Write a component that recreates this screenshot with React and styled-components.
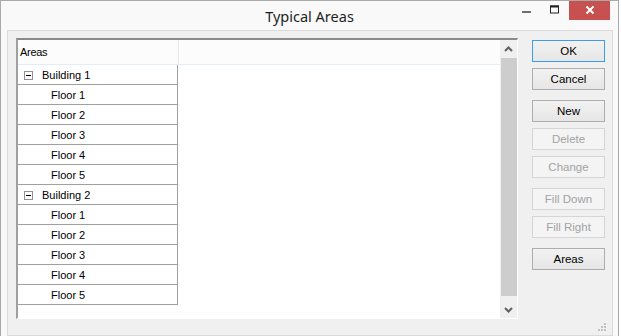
import styled, { createGlobalStyle } from 'styled-components';

const GlobalStyle = createGlobalStyle`
  html, body {
    margin: 0;
    padding: 0;
    background: #ffffff;
  }
  body {
    font-family: 'Liberation Sans', Arial, sans-serif;
  }
`;

const Window = styled.div`
  width: 619px;
  height: 336px;
  box-sizing: border-box;
  border: 1px solid #a9a9a9;
  border-bottom: none;
  background: #f9f9f9;
  display: flex;
  flex-direction: column;
  overflow: hidden;
`;

const TitleBar = styled.div`
  height: 29px;
  display: flex;
  align-items: flex-start;
`;

const Title = styled.div`
  flex: 1;
  text-align: center;
  font-family: 'Noto Sans', 'Open Sans', sans-serif;
  font-size: 14.5px;
  color: #1e1e1e;
  line-height: 31px;
  padding-left: 105px;
`;

const Caption = styled.div`
  display: flex;
  align-items: flex-start;
  margin-top: -1px;
  margin-right: 8px;
`;

const CaptionButton = styled.div`
  width: ${(p) => p.$w || 27}px;
  height: 20px;
  display: flex;
  align-items: center;
  justify-content: center;
  background: ${(p) => (p.$close ? '#c75050' : 'transparent')};
`;

const Client = styled.div`
  flex: 1;
  margin: 0 5px 0 6px;
  border: 1px solid #dadada;
  background: #f0f0f0;
  display: flex;
  padding: 7px 0 0 8px;
  gap: 14px;
  position: relative;
`;

const Grid = styled.div`
  width: 502px;
  height: 281px;
  box-sizing: border-box;
  border-top: 2px solid #8a8a8a;
  border-left: 2px solid #a0a0a0;
  border-right: 1px solid #ffffff;
  border-bottom: 1px solid #ffffff;
  background: #ffffff;
  display: flex;
`;

const GridBody = styled.div`
  flex: 1;
  display: flex;
  flex-direction: column;
`;

const Header = styled.div`
  height: 25px;
  display: flex;
  background: #fcfcfc;
  border-bottom: 1px solid #e3ecf8;
  box-sizing: border-box;
`;

const HeaderCell = styled.div`
  width: ${(p) => p.$w}px;
  flex: ${(p) => (p.$w ? 'none' : 1)};
  border-right: ${(p) => (p.$w ? '1px solid #e6eaf0' : 'none')};
  font-size: 11px;
  color: #000;
  line-height: 24px;
  padding-left: 2px;
  letter-spacing: -0.3px;
`;

const Rows = styled.div`
  display: flex;
  flex-direction: column;
`;

const Row = styled.div`
  width: 160px;
  height: 20px;
  box-sizing: border-box;
  border-right: 1px solid #a0a0a0;
  border-bottom: 1px solid #a0a0a0;
  display: flex;
  align-items: center;
  padding-left: ${(p) => (p.$child ? 33 : 6)}px;
  font-size: 11px;
  color: #000;
`;

const Toggle = styled.span`
  width: 9px;
  height: 9px;
  box-sizing: border-box;
  border: 1px solid #919191;
  position: relative;
  margin-right: 9px;
  margin-top: 1px;

  &::after {
    content: '';
    position: absolute;
    left: 1px;
    right: 1px;
    top: 3px;
    height: 1px;
    background: #000;
  }
`;

const ScrollBar = styled.div`
  width: 17px;
  background: #f0f0f0;
  display: flex;
  flex-direction: column;
  align-items: stretch;
`;

const Arrow = styled.div`
  height: 17px;
  display: flex;
  align-items: center;
  justify-content: center;
`;

const Thumb = styled.div`
  flex: 1;
  margin: 1px 0 5px 1px;
  background: #cdcdcd;
`;

const Buttons = styled.div`
  display: flex;
  flex-direction: column;
  padding-top: 2px;
`;

const Button = styled.div`
  width: 73px;
  height: 22px;
  margin-top: ${(p) => p.$gap}px;
  box-sizing: border-box;
  border: 1px solid ${(p) => (p.$default ? '#3c9cf0' : p.$disabled ? '#d5d5d5' : '#adadad')};
  background: ${(p) => (p.$disabled ? '#f4f4f4' : 'linear-gradient(#f2f2f2, #e6e6e6)')};
  color: ${(p) => (p.$disabled ? '#a3a3a3' : '#000')};
  font-size: 11.5px;
  display: flex;
  align-items: center;
  justify-content: center;
`;

const Grip = styled.svg`
  position: absolute;
  right: 5px;
  bottom: 3px;
`;

const buildings = ['Building 1', 'Building 2'];
const floors = ['Floor 1', 'Floor 2', 'Floor 3', 'Floor 4', 'Floor 5'];

const buttons = [
  { label: 'OK', gap: 0, def: true },
  { label: 'Cancel', gap: 6 },
  { label: 'New', gap: 10 },
  { label: 'Delete', gap: 6, disabled: true },
  { label: 'Change', gap: 6, disabled: true },
  { label: 'Fill Down', gap: 10, disabled: true },
  { label: 'Fill Right', gap: 6, disabled: true },
  { label: 'Areas', gap: 10 },
];

const App = () => {
  return (
    <>
      <GlobalStyle />
      <Window>
        <TitleBar>
          <Title>Typical Areas</Title>
          <Caption>
            <CaptionButton $w={28}>
              <svg width="10" height="10" viewBox="0 0 10 10">
                <rect x="0" y="6" width="9" height="2" fill="#6e6e6e" />
              </svg>
            </CaptionButton>
            <CaptionButton $w={28}>
              <svg width="10" height="10" viewBox="0 0 10 10">
                <rect x="0.5" y="1" width="8" height="7" fill="none" stroke="#222" />
                <rect x="0" y="0.5" width="9" height="2" fill="#222" />
              </svg>
            </CaptionButton>
            <CaptionButton $close $w={41}>
              <svg width="10" height="10" viewBox="0 0 10 10">
                <path d="M1.5 1.5 L8.5 8.5 M8.5 1.5 L1.5 8.5" stroke="#fff" strokeWidth="2" />
              </svg>
            </CaptionButton>
          </Caption>
        </TitleBar>
        <Client>
          <Grid>
            <GridBody>
              <Header>
                <HeaderCell $w={158}>Areas</HeaderCell>
                <HeaderCell />
              </Header>
              <Rows>
                {buildings.map((b) => (
                  <div key={b}>
                    <Row>
                      <Toggle />
                      {b}
                    </Row>
                    {floors.map((f) => (
                      <Row key={f} $child>{f}</Row>
                    ))}
                  </div>
                ))}
              </Rows>
            </GridBody>
            <ScrollBar>
              <Arrow>
                <svg width="9" height="6" viewBox="0 0 9 6">
                  <path d="M1 5 L4.5 1.5 L8 5" fill="none" stroke="#606060" strokeWidth="2" />
                </svg>
              </Arrow>
              <Thumb />
              <Arrow>
                <svg width="9" height="6" viewBox="0 0 9 6">
                  <path d="M1 1 L4.5 4.5 L8 1" fill="none" stroke="#606060" strokeWidth="2" />
                </svg>
              </Arrow>
            </ScrollBar>
          </Grid>
          <Buttons>
            {buttons.map((b) => (
              <Button key={b.label} $gap={b.gap} $default={b.def} $disabled={b.disabled}>
                {b.label}
              </Button>
            ))}
          </Buttons>
          <Grip width="9" height="9" viewBox="0 0 9 9">
            <rect x="6" y="0" width="2" height="2" fill="#c2c2c2" />
            <rect x="3" y="3" width="2" height="2" fill="#c2c2c2" />
            <rect x="6" y="3" width="2" height="2" fill="#c2c2c2" />
            <rect x="0" y="6" width="2" height="2" fill="#c2c2c2" />
            <rect x="3" y="6" width="2" height="2" fill="#c2c2c2" />
            <rect x="6" y="6" width="2" height="2" fill="#c2c2c2" />
          </Grip>
        </Client>
      </Window>
    </>
  );
};

export default App;
